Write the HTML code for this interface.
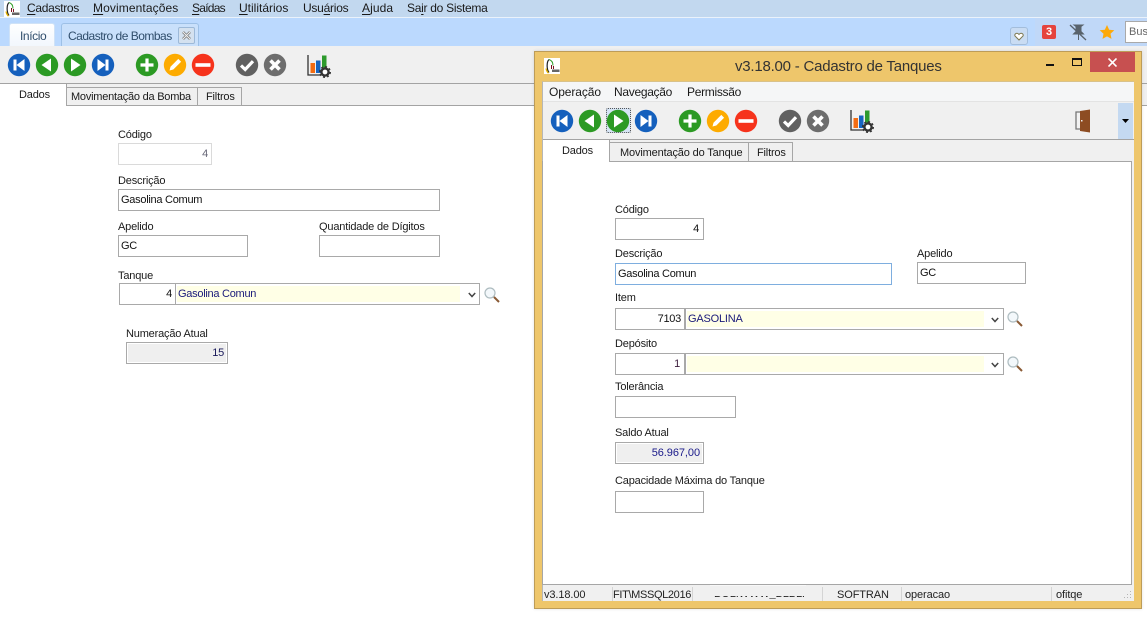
<!DOCTYPE html>
<html lang="pt"><head><meta charset="utf-8"><title>Cadastro de Bombas</title>
<style>
html,body{margin:0;padding:0}
body{width:1147px;height:623px;overflow:hidden;position:relative;background:#fff;font:12px/14px "Liberation Sans",sans-serif;color:#111}
div,span.a,svg.a{position:absolute;box-sizing:border-box}
.t{white-space:nowrap;line-height:14px;height:14px}
.m{font-size:12px;color:#1a1a1a}
.l{font-size:11px;letter-spacing:-.18px;color:#1a1a1a}
.b{background:#fff;border:1px solid #a9a9a9}
.v{font-size:11px;letter-spacing:-.27px;color:#111;white-space:nowrap;line-height:14px;height:14px}
.tab{background:#f0f0f0;border:1px solid #a6a6a6;border-bottom:1px solid #a6a6a6}
.y{background:#ffffe6}
.st{font-size:11px;letter-spacing:-.1px;color:#222;white-space:nowrap;line-height:14px;height:14px}
.sep{width:1px;background:#d4d4d4;top:587px;height:14px}
u{text-decoration-thickness:1px;text-underline-offset:2px}
</style></head><body>
<svg width="0" height="0" style="position:absolute">
<defs>
<symbol id="first" viewBox="0 0 24 24"><circle cx="12" cy="12" r="11.200" fill="#1560bd"/><rect x="6.500" y="6.500" width="3" height="11" fill="#fff"/><path d="M17.500 6v12l-8-6z" fill="#fff"/></symbol>
<symbol id="prev" viewBox="0 0 24 24"><circle cx="12" cy="12" r="11.200" fill="#2c9a24"/><path d="M16 5.500v13L6.500 12z" fill="#fff"/></symbol>
<symbol id="next" viewBox="0 0 24 24"><circle cx="12" cy="12" r="11.200" fill="#2c9a24"/><path d="M8 5.500v13l9.500-6.500z" fill="#fff"/></symbol>
<symbol id="last" viewBox="0 0 24 24"><circle cx="12" cy="12" r="11.200" fill="#1560bd"/><path d="M6.500 6v12l8-6z" fill="#fff"/><rect x="14.500" y="6.500" width="3" height="11" fill="#fff"/></symbol>
<symbol id="add" viewBox="0 0 24 24"><circle cx="12" cy="12" r="11.200" fill="#2c9a24"/><path d="M12 5.500v13M5.500 12h13" stroke="#fff" stroke-width="3.200"/></symbol>
<symbol id="edit" viewBox="0 0 24 24"><circle cx="12" cy="12" r="11.200" fill="#fdab00"/><path d="M6.500 17.500l1-3.800 7.800-7.800 2.800 2.800-7.800 7.800z" fill="#fff"/></symbol>
<symbol id="del" viewBox="0 0 24 24"><circle cx="12" cy="12" r="11.200" fill="#f6331c"/><rect x="4.500" y="10.200" width="15" height="3.600" fill="#fff"/></symbol>
<symbol id="ok" viewBox="0 0 24 24"><circle cx="12" cy="12" r="11.200" fill="#616161"/><path d="M6 12.500l4.200 4L18 8.200" fill="none" stroke="#fff" stroke-width="3.200"/></symbol>
<symbol id="no" viewBox="0 0 24 24"><circle cx="12" cy="12" r="11.200" fill="#6d6d6d"/><path d="M7.500 7.500l9 9M16.500 7.500l-9 9" stroke="#fff" stroke-width="3.600"/></symbol>
<symbol id="chart" viewBox="0 0 24 24"><path d="M1 1v20h13" fill="none" stroke="#333" stroke-width="1.300"/><rect x="3.500" y="9" width="4.500" height="10" fill="#f36c12"/><rect x="9" y="6.500" width="4.500" height="12.500" fill="#1765c1"/><rect x="15" y="1.500" width="4.500" height="12" fill="#2d9a2d"/><circle cx="18" cy="18" r="3.600" fill="#fff" stroke="#333" stroke-width="2.400"/><circle cx="18" cy="18" r="5.300" fill="none" stroke="#333" stroke-width="1.400" stroke-dasharray="2 2.150"/></symbol>
<symbol id="mag" viewBox="0 0 16 16"><circle cx="6" cy="6" r="5" fill="#f3f8fb" stroke="#aebcc0" stroke-width="1.200"/><path d="M10 10l5 5" stroke="#8a5a35" stroke-width="2"/></symbol>
<symbol id="arr" viewBox="0 0 8 6"><path d="M.8 1l3.200 3.500L7.200 1" fill="none" stroke="#444" stroke-width="1.500"/></symbol>
<symbol id="logo" viewBox="0 0 16 16"><rect width="16" height="16" fill="#fff"/><path d="M5 1.500C2.500 4 2.500 11 5 14.500" fill="none" stroke="#222" stroke-width="1.200"/><path d="M5 1.500c3 1 4 3 4 6" fill="none" stroke="#2c9a24" stroke-width="1"/><path d="M4.500 15c-1.500-1-2-2.500-2.400-4.500" fill="none" stroke="#e3b100" stroke-width="1.400"/><path d="M7 7h1v4H7zM9 8h1v3H9z" fill="#7a1020"/><rect x="8" y="11.500" width="7.500" height="2.500" fill="#666"/></symbol>
</defs></svg>

<!-- top chrome -->
<div style="left:0;top:0;width:1147px;height:17px;background:#c2d8ef"></div>
<div style="left:0;top:17px;width:1147px;height:1px;background:#eaf2fb"></div>
<div style="left:0;top:18px;width:1147px;height:28px;background:#bbd9fe"></div>
<div style="left:1035px;top:18px;width:112px;height:28px;background:#c0d8f8"></div>
<svg class="a" style="left:4px;top:1px" width="16" height="16"><use href="#logo"/></svg>
<div class="t m" style="left:27px;top:1px;letter-spacing:-.3px"><u>C</u>adastros</div>
<div class="t m" style="left:93px;top:1px;letter-spacing:.1px"><u>M</u>ovimentações</div>
<div class="t m" style="left:192px;top:1px;letter-spacing:-.75px"><u>S</u>aídas</div>
<div class="t m" style="left:239px;top:1px;letter-spacing:0"><u>U</u>tilitários</div>
<div class="t m" style="left:303px;top:1px;letter-spacing:-.25px">Usu<u>á</u>rios</div>
<div class="t m" style="left:362px;top:1px;letter-spacing:.1px"><u>A</u>juda</div>
<div class="t m" style="left:407px;top:1px;letter-spacing:-.28px">Sa<u>i</u>r do Sistema</div>

<div style="left:9px;top:23px;width:46px;height:23px;background:linear-gradient(#fff,#f2f7fd);border:1px solid #cfe2f7;border-bottom:0;border-radius:3px 3px 0 0"></div>
<div class="t m" style="left:20px;top:29px;color:#2f4d6b;letter-spacing:-.4px">Início</div>
<div style="left:61px;top:23px;width:138px;height:23px;background:#c9e0fb;border:1px solid #9dc0e6;border-bottom:0;border-radius:3px 3px 0 0"></div>
<div class="t m" style="left:68px;top:29px;color:#2f4d6b;letter-spacing:-.5px">Cadastro de Bombas</div>
<div style="left:178px;top:27px;width:17px;height:17px;background:#d4e1ef;border:1px solid #9db9d8;border-radius:2px"></div>
<svg class="a" style="left:181px;top:30px" width="11" height="11"><path d="M2 2l7 7M9 2l-7 7" stroke="#777" stroke-width="2.600"/><path d="M2 2l7 7M9 2l-7 7" stroke="#f2f2f2" stroke-width="1"/></svg>

<div style="left:1010px;top:27px;width:18px;height:18px;background:#c9dcf3;border:1px solid #a3bddb;border-radius:3px"></div>
<svg class="a" style="left:1014px;top:32px" width="10" height="9"><path d="M5 8L1 4c-1-2 2-4 4-1.500C7-0 10 2 9 4z" fill="#fff" stroke="#7d7850" stroke-width="1"/></svg>
<div style="left:1042px;top:25px;width:14px;height:14px;background:#e5443e;border-radius:2px"></div>
<div class="t" style="left:1042px;top:25px;width:14px;text-align:center;color:#fff;font-weight:bold;font-size:11px">3</div>
<svg class="a" style="left:1069px;top:24px" width="18" height="17"><path d="M5 1h9l-2 1.500v5l2.500 2.500h-10L7 7.500v-5zM9.500 10v6" fill="#59636c" stroke="#59636c"/><path d="M1 1l16 15" stroke="#59636c" stroke-width="1.300"/></svg>
<svg class="a" style="left:1099px;top:24px" width="16" height="16"><path d="M8 1l2.200 4.700 5.100.6-3.800 3.500 1 5.100L8 12.400l-4.500 2.500 1-5.100L.7 6.300l5.100-.6z" fill="#fda909"/></svg>
<div style="left:1125px;top:21px;width:30px;height:22px;background:#fff;border:1px solid #a9a9a9"></div>
<div class="t" style="left:1129px;top:25px;font-size:11px;color:#666">Busca</div>

<!-- main toolbar -->
<div style="left:0;top:46px;width:1147px;height:37px;background:#f0f0f0"></div>
<div style="left:0;top:83px;width:1147px;height:1px;background:#a3a3a3"></div>
<div style="left:0;top:84px;width:1147px;height:21px;background:#f0f0f0"></div>
<div style="left:0;top:105px;width:1147px;height:1px;background:#a3a3a3"></div>
<svg class="a" style="left:7px;top:53px" width="24" height="24"><use href="#first"/></svg>
<svg class="a" style="left:35px;top:53px" width="24" height="24"><use href="#prev"/></svg>
<svg class="a" style="left:63px;top:53px" width="24" height="24"><use href="#next"/></svg>
<svg class="a" style="left:91px;top:53px" width="24" height="24"><use href="#last"/></svg>
<svg class="a" style="left:135px;top:53px" width="24" height="24"><use href="#add"/></svg>
<svg class="a" style="left:163px;top:53px" width="24" height="24"><use href="#edit"/></svg>
<svg class="a" style="left:191px;top:53px" width="24" height="24"><use href="#del"/></svg>
<svg class="a" style="left:235px;top:53px" width="24" height="24"><use href="#ok"/></svg>
<svg class="a" style="left:263px;top:53px" width="24" height="24"><use href="#no"/></svg>
<svg class="a" style="left:307px;top:54px" width="24" height="24"><use href="#chart"/></svg>

<!-- main tabs -->
<div style="left:0;top:84px;width:67px;height:22px;background:#fff"></div>
<div style="left:66px;top:84px;width:1px;height:21px;background:#a3a3a3"></div>
<div class="t l" style="left:19px;top:88px">Dados</div>
<div class="tab" style="left:66px;top:87px;width:132px;height:19px"></div>
<div class="t l" style="left:71px;top:90px;letter-spacing:-.23px">Movimentação da Bomba</div>
<div class="tab" style="left:197px;top:87px;width:45px;height:19px"></div>
<div class="t l" style="left:206px;top:90px">Filtros</div>

<!-- main form -->
<div class="t l" style="left:118px;top:128px">Código</div>
<div class="b" style="left:118px;top:143px;width:94px;height:22px;border-color:#dadada"></div>
<div class="v" style="left:118px;top:147px;width:90px;text-align:right;color:#667">4</div>
<div class="t l" style="left:118px;top:174px">Descrição</div>
<div class="b" style="left:118px;top:189px;width:322px;height:22px"></div>
<div class="v" style="left:121px;top:193px">Gasolina Comum</div>
<div class="t l" style="left:118px;top:220px">Apelido</div>
<div class="b" style="left:118px;top:235px;width:130px;height:22px"></div>
<div class="v" style="left:121px;top:239px">GC</div>
<div class="t l" style="left:319px;top:220px">Quantidade de Dígitos</div>
<div class="b" style="left:319px;top:235px;width:121px;height:22px"></div>
<div class="t l" style="left:118px;top:269px">Tanque</div>
<div class="b" style="left:119px;top:283px;width:361px;height:22px"></div>
<div style="left:175px;top:283px;width:1px;height:22px;background:#a9a9a9"></div>
<div class="y" style="left:177px;top:286px;width:283px;height:16px"></div>
<div class="v" style="left:119px;top:287px;width:53px;text-align:right">4</div>
<div class="v" style="left:178px;top:287px;color:#1a1a7a">Gasolina Comun</div>
<svg class="a" style="left:468px;top:292px" width="8" height="6"><use href="#arr"/></svg>
<svg class="a" style="left:484px;top:287px" width="16" height="16"><use href="#mag"/></svg>
<div class="t l" style="left:126px;top:327px">Numeração Atual</div>
<div class="b" style="left:126px;top:342px;width:102px;height:22px"></div>
<div style="left:128px;top:344px;width:98px;height:18px;background:#efefef"></div>
<div class="v" style="left:126px;top:346px;width:98px;text-align:right;color:#1a1a5a">15</div>

<!-- floating window -->
<div style="left:534px;top:51px;width:608px;height:558px;background:#eec66b;border:1px solid #bd9c58;box-shadow:0 0 3px rgba(0,0,0,.12)"></div>
<svg class="a" style="left:544px;top:58px" width="16" height="16"><use href="#logo"/></svg>
<div class="t" style="left:735px;top:59px;font-size:15px;line-height:16px;height:16px;letter-spacing:-.22px;color:#333">v3.18.00 - Cadastro de Tanques</div>
<div style="left:1046px;top:64px;width:8px;height:2px;background:#111"></div>
<div style="left:1072px;top:58px;width:10px;height:8px;border:1px solid #111;border-top-width:2px"></div>
<div style="left:1090px;top:52px;width:45px;height:20px;background:#c75050"></div>
<svg class="a" style="left:1108px;top:58px" width="9" height="9"><path d="M.5.5l8 8M8.500.5l-8 8" stroke="#fff" stroke-width="1.600"/></svg>

<div style="left:542px;top:81px;width:592px;height:520px;background:#f0f0f0;border-left:1px solid #b6b6b6;border-top:1px solid #d9c28a"></div>
<div style="left:543px;top:82px;width:591px;height:19px;background:#f5f6f7"></div>
<div style="left:543px;top:101px;width:591px;height:1px;background:#e3e3e3"></div>
<div class="t m" style="left:549px;top:85px;letter-spacing:-.1px">Operação</div>
<div class="t m" style="left:614px;top:85px;letter-spacing:-.3px">Navegação</div>
<div class="t m" style="left:687px;top:85px;letter-spacing:-.3px">Permissão</div>

<div style="left:543px;top:139px;width:591px;height:1px;background:#a3a3a3"></div>
<div style="left:606px;top:108px;width:25px;height:25px;background:#d6e4f5;border:1px dotted #555;border-radius:2px"></div>
<svg class="a" style="left:550px;top:109px" width="24" height="24"><use href="#first"/></svg>
<svg class="a" style="left:578px;top:109px" width="24" height="24"><use href="#prev"/></svg>
<svg class="a" style="left:606px;top:109px" width="24" height="24"><use href="#next"/></svg>
<svg class="a" style="left:634px;top:109px" width="24" height="24"><use href="#last"/></svg>
<svg class="a" style="left:678px;top:109px" width="24" height="24"><use href="#add"/></svg>
<svg class="a" style="left:706px;top:109px" width="24" height="24"><use href="#edit"/></svg>
<svg class="a" style="left:734px;top:109px" width="24" height="24"><use href="#del"/></svg>
<svg class="a" style="left:778px;top:109px" width="24" height="24"><use href="#ok"/></svg>
<svg class="a" style="left:806px;top:109px" width="24" height="24"><use href="#no"/></svg>
<svg class="a" style="left:850px;top:109px" width="24" height="24"><use href="#chart"/></svg>
<svg class="a" style="left:1075px;top:109px" width="16" height="24"><path d="M1 3h13v17H1z" fill="#f2f2f2" stroke="#777" stroke-width="1.300"/><path d="M5 2l10-1.500v23L5 22z" fill="#8d4c22"/><rect x="6" y="11" width="1.500" height="1.500" fill="#eee"/></svg>
<div style="left:1118px;top:103px;width:15px;height:36px;background:#c4d9f1"></div>
<svg class="a" style="left:1122px;top:119px" width="7" height="4"><path d="M0 0h7L3.500 4z" fill="#000"/></svg>

<!-- window tabs + page -->
<div class="b" style="left:542px;top:161px;width:590px;height:424px;border-color:#a6a6a6"></div>
<div style="left:543px;top:140px;width:67px;height:22px;background:#fff;border-right:1px solid #a6a6a6"></div>
<div class="t l" style="left:562px;top:144px">Dados</div>
<div class="tab" style="left:609px;top:142px;width:140px;height:20px"></div>
<div class="t l" style="left:620px;top:146px;letter-spacing:-.15px">Movimentação do Tanque</div>
<div class="tab" style="left:748px;top:142px;width:45px;height:20px"></div>
<div class="t l" style="left:757px;top:146px">Filtros</div>

<!-- window form -->
<div class="t l" style="left:615px;top:203px">Código</div>
<div class="b" style="left:615px;top:218px;width:89px;height:22px"></div>
<div class="v" style="left:615px;top:222px;width:84px;text-align:right">4</div>
<div class="t l" style="left:615px;top:247px">Descrição</div>
<div class="b" style="left:615px;top:263px;width:277px;height:22px;border-color:#7eaedf"></div>
<div class="v" style="left:618px;top:267px">Gasolina Comun</div>
<div class="t l" style="left:917px;top:247px">Apelido</div>
<div class="b" style="left:917px;top:262px;width:109px;height:22px"></div>
<div class="v" style="left:920px;top:266px">GC</div>
<div class="t l" style="left:615px;top:291px">Item</div>
<div class="b" style="left:615px;top:308px;width:389px;height:22px"></div>
<div style="left:684px;top:308px;width:2px;height:22px;background:#a9a9a9"></div>
<div class="y" style="left:687px;top:311px;width:297px;height:16px"></div>
<div class="v" style="left:615px;top:312px;width:66px;text-align:right">7103</div>
<div class="v" style="left:688px;top:312px;color:#1a1a7a;letter-spacing:-.2px">GASOLINA</div>
<svg class="a" style="left:991px;top:317px" width="8" height="6"><use href="#arr"/></svg>
<svg class="a" style="left:1007px;top:311px" width="16" height="16"><use href="#mag"/></svg>
<div class="t l" style="left:615px;top:337px">Depósito</div>
<div class="b" style="left:615px;top:353px;width:389px;height:22px"></div>
<div style="left:684px;top:353px;width:2px;height:22px;background:#a9a9a9"></div>
<div class="y" style="left:687px;top:356px;width:297px;height:16px"></div>
<div class="v" style="left:615px;top:357px;width:65px;text-align:right;color:#3a1a3a">1</div>
<svg class="a" style="left:991px;top:362px" width="8" height="6"><use href="#arr"/></svg>
<svg class="a" style="left:1007px;top:356px" width="16" height="16"><use href="#mag"/></svg>
<div class="t l" style="left:615px;top:380px">Tolerância</div>
<div class="b" style="left:615px;top:396px;width:121px;height:22px"></div>
<div class="t l" style="left:615px;top:426px">Saldo Atual</div>
<div class="b" style="left:615px;top:442px;width:89px;height:22px"></div>
<div style="left:617px;top:444px;width:85px;height:18px;background:#efefef"></div>
<div class="v" style="left:615px;top:446px;width:85px;text-align:right;color:#1a1a8a;letter-spacing:-.07px">56.967,00</div>
<div class="t l" style="left:615px;top:474px">Capacidade Máxima do Tanque</div>
<div class="b" style="left:615px;top:491px;width:89px;height:22px"></div>

<!-- status bar -->
<div class="st" style="left:544px;top:588px">v3.18.00</div>
<div class="sep" style="left:612px"></div>
<div class="st" style="left:613px;top:588px;letter-spacing:-.35px">FIT\MSSQL2016</div>
<div class="sep" style="left:692px"></div>
<div style="left:710px;top:585px;width:96px;height:1px;background:#f8f8f8"></div>
<div style="left:714px;top:596px;width:90px;height:3px;overflow:hidden"><div class="st" style="left:0;top:-9px">BOL.WWW_BLBLB.</div></div>
<div class="sep" style="left:822px"></div>
<div class="st" style="left:837px;top:588px">SOFTRAN</div>
<div class="sep" style="left:901px"></div>
<div class="st" style="left:905px;top:588px">operacao</div>
<div class="sep" style="left:1051px"></div>
<div class="st" style="left:1056px;top:588px">ofitqe</div>
<svg class="a" style="left:1123px;top:590px" width="9" height="9"><path d="M7 1h1v1H7zM4 4h1v1H4zM7 4h1v1H7zM1 7h1v1H1zM4 7h1v1H4zM7 7h1v1H7z" fill="#b5b5b5"/></svg>
</body></html>
